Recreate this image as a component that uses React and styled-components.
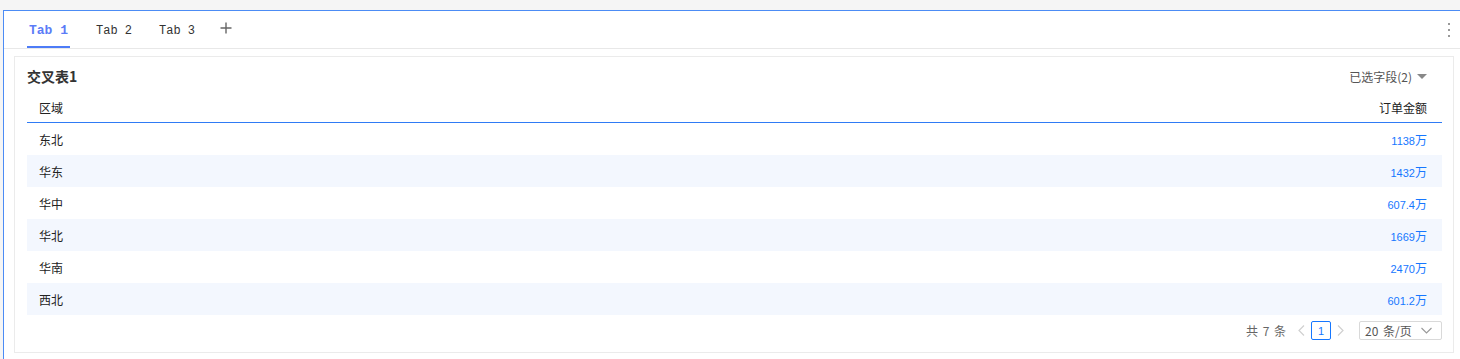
import React from "react";
import styled, { createGlobalStyle } from "styled-components";

const Global = createGlobalStyle`
  html, body { margin: 0; padding: 0; background: #f5f5f5; overflow: hidden; }
  body { font-family: "Noto Sans CJK SC", "Liberation Sans", sans-serif; }
`;

const Page = styled.div`
  padding: 10px 0 0 3px;
  height: 359px;
  box-sizing: border-box;
`;

const Frame = styled.div`
  width: 1460px;
  height: 360px;
  box-sizing: border-box;
  border: 1px solid #4c8cf5;
  border-right: none;
  background: #fff;
`;

const TabBar = styled.div`
  height: 38px;
  box-sizing: border-box;
  border-bottom: 1px solid #e8e8e8;
  display: flex;
  align-items: stretch;
  padding-left: 23px;
  padding-right: 13px;
`;

const Tab = styled.div`
  position: relative;
  display: flex;
  align-items: center;
  padding: 2px 2px 0;
  margin-right: ${(p) => (p.$active ? "24px" : "23px")};
  font-family: "Liberation Mono", monospace;
  font-size: ${(p) => (p.$active ? "13px" : "12px")};
  font-weight: ${(p) => (p.$active ? 700 : 400)};
  color: ${(p) => (p.$active ? "#5b7cf7" : "#333")};
  &::after {
    content: "";
    display: ${(p) => (p.$active ? "block" : "none")};
    position: absolute;
    left: 0;
    right: 0;
    bottom: 0;
    height: 2px;
    background: #4d7cf7;
  }
`;

const AddBtn = styled.div`
  display: flex;
  align-items: center;
  margin-top: -3px;
`;

const Spacer = styled.div`
  flex: 1;
`;

const Kebab = styled.div`
  display: flex;
  flex-direction: column;
  justify-content: center;
  gap: 4px;
  span {
    width: 2px;
    height: 2px;
    background: #999;
  }
`;

const Body = styled.div`
  padding: 7px 0 0 10px;
`;

const Card = styled.div`
  width: 1440px;
  box-sizing: border-box;
  border: 1px solid #ebebeb;
  padding: 9px 11px 12px 12px;
`;

const CardHead = styled.div`
  display: flex;
  align-items: center;
  justify-content: space-between;
  height: 20px;
`;

const Title = styled.div`
  font-size: 14px;
  font-weight: 700;
  color: #333;
`;

const FieldPicker = styled.div`
  display: flex;
  align-items: center;
  gap: 4px;
  font-size: 12px;
  color: #555;
  padding-right: 15px;
`;

const Caret = styled.span`
  width: 0;
  height: 0;
  border-left: 5px solid transparent;
  border-right: 5px solid transparent;
  border-top: 5px solid #888;
  margin-left: 1px;
`;

const Table = styled.div`
  margin-top: 6px;
`;

const HeaderRow = styled.div`
  display: flex;
  align-items: center;
  justify-content: space-between;
  height: 31px;
  border-bottom: 1px solid #2f7bf5;
  padding: 0 15px 0 12px;
  box-sizing: border-box;
  font-size: 12px;
  color: #222;
`;

const Row = styled.div`
  display: flex;
  align-items: center;
  justify-content: space-between;
  height: 32px;
  box-sizing: border-box;
  padding: 0 15px 0 12px;
  background: ${(p) => (p.$striped ? "#f3f7fe" : "#fff")};
  font-size: 12px;
  color: #222;
`;

const Value = styled.span`
  color: #1677ff;
  font-family: "Liberation Sans", "Noto Sans CJK SC", sans-serif;
  font-size: 11px;
  span { font-family: "Noto Sans CJK SC", sans-serif; font-size: 12px; }
`;

const Pager = styled.div`
  display: flex;
  justify-content: flex-end;
  align-items: center;
  margin-top: 6px;
  height: 19px;
  font-size: 12px;
  color: #666;
`;

const Total = styled.span`
  word-spacing: 2px;
  margin-right: 6px;
`;

const Arrow = styled.span`
  display: flex;
  align-items: center;
  color: #ccc;
  margin: 0 6px;
`;

const PageBox = styled.span`
  width: 20px;
  height: 19px;
  box-sizing: border-box;
  border: 1px solid #1677ff;
  border-radius: 2px;
  color: #1677ff;
  display: flex;
  align-items: center;
  justify-content: center;
  font-family: "Liberation Sans", sans-serif;
  font-size: 11px;
`;

const SizeSelect = styled.div`
  width: 83px;
  height: 19px;
  box-sizing: border-box;
  border: 1px solid #d9d9d9;
  border-radius: 2px;
  margin-left: 9px;
  display: flex;
  align-items: center;
  justify-content: space-between;
  padding: 0 9px 0 5px;
  color: #555;
  font-size: 12px;
  word-spacing: 2px;
`;

const rows = [
  ["东北", "1138"],
  ["华东", "1432"],
  ["华中", "607.4"],
  ["华北", "1669"],
  ["华南", "2470"],
  ["西北", "601.2"],
];

export default function App() {
  return (
    <>
      <Global />
      <Page>
        <Frame>
          <TabBar>
            <Tab $active>Tab 1</Tab>
            <Tab>Tab 2</Tab>
            <Tab>Tab 3</Tab>
            <AddBtn>
              <svg width="12" height="12" viewBox="0 0 12 12">
                <path d="M6 0.5V11.5M0.5 6H11.5" stroke="#666" strokeWidth="1.4" fill="none" />
              </svg>
            </AddBtn>
            <Spacer />
            <Kebab>
              <span />
              <span />
              <span />
            </Kebab>
          </TabBar>
          <Body>
            <Card>
              <CardHead>
                <Title>交叉表1</Title>
                <FieldPicker>
                  已选字段(2)
                  <Caret />
                </FieldPicker>
              </CardHead>
              <Table>
                <HeaderRow>
                  <span>区域</span>
                  <span>订单金额</span>
                </HeaderRow>
                {rows.map(([k, v], i) => (
                  <Row key={k} $striped={i % 2 === 1}>
                    <span>{k}</span>
                    <Value>
                      {v}
                      <span>万</span>
                    </Value>
                  </Row>
                ))}
              </Table>
              <Pager>
                <Total>共 7 条</Total>
                <Arrow>
                  <svg width="7" height="11" viewBox="0 0 7 11">
                    <path d="M6 0.5L1 5.5L6 10.5" stroke="#d0d0d0" strokeWidth="1.2" fill="none" />
                  </svg>
                </Arrow>
                <PageBox>1</PageBox>
                <Arrow>
                  <svg width="7" height="11" viewBox="0 0 7 11">
                    <path d="M1 0.5L6 5.5L1 10.5" stroke="#d0d0d0" strokeWidth="1.2" fill="none" />
                  </svg>
                </Arrow>
                <SizeSelect>
                  <span>20 条/页</span>
                  <svg width="11" height="7" viewBox="0 0 11 7">
                    <path d="M0.5 1L5.5 6L10.5 1" stroke="#999" strokeWidth="1.1" fill="none" />
                  </svg>
                </SizeSelect>
              </Pager>
            </Card>
          </Body>
        </Frame>
      </Page>
    </>
  );
}
